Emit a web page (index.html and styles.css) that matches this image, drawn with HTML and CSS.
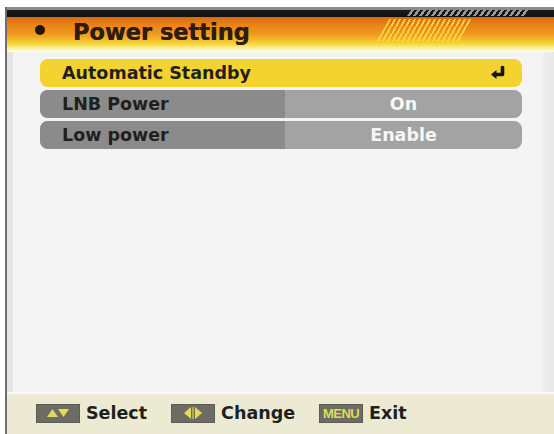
FILE: index.html
```html
<!DOCTYPE html>
<html>
<head>
<meta charset="utf-8">
<link rel="stylesheet" href="styles.css">
</head>
<body>
<div class="screen">
  <div class="frame">
    <div class="header">
      <div class="band"></div>
      <div class="title-row">
        <span class="bullet"></span>
        <span class="title">Power setting</span>
      </div>
      <div class="stripes-top"></div>
      <div class="stripes-low"></div>
    </div>
    <div class="rows">
      <div class="row active">
        <span class="label">Automatic Standby</span>
        <svg class="enter" width="16" height="15" viewBox="0 0 16 15">
          <path d="M12.5 1.5 V8.5 H6" fill="none" stroke="#141414" stroke-width="3.6" stroke-linecap="round" stroke-linejoin="round"/>
          <path d="M1 8.5 L6.5 4 L6.5 13 Z" fill="#141414"/>
        </svg>
      </div>
      <div class="row">
        <span class="label cell">LNB Power</span>
        <span class="value">On</span>
      </div>
      <div class="row">
        <span class="label cell">Low power</span>
        <span class="value">Enable</span>
      </div>
    </div>
    <div class="spacer"></div>
    <div class="footer">
      <div class="hint">
        <span class="key">
          <svg width="22" height="8" viewBox="0 0 22 8"><path d="M0 8 L5.5 0 L11 8 Z M11 0 L22 0 L16.5 8 Z" fill="#e6da52"/></svg>
        </span>
        <span class="hint-text">Select</span>
      </div>
      <div class="hint">
        <span class="key">
          <svg width="20" height="12" viewBox="0 0 20 12"><path d="M8 0 L8 12 L1 6 Z M12 0 L12 12 L19 6 Z" fill="#e6da52"/><rect x="9.2" y="0" width="1.6" height="12" fill="#c9bd3a"/></svg>
        </span>
        <span class="hint-text">Change</span>
      </div>
      <div class="hint">
        <span class="key menu">MENU</span>
        <span class="hint-text">Exit</span>
      </div>
    </div>
  </div>
</div>
</body>
</html>
```

FILE: styles.css
```css
html, body {
  margin: 0;
  padding: 0;
}
body {
  width: 554px;
  height: 434px;
  overflow: hidden;
  background: #ffffff;
  font-family: "DejaVu Sans", "Liberation Sans", sans-serif;
}
.screen {
  height: 434px;
  box-sizing: border-box;
  padding-top: 7px;
  display: flex;
  flex-direction: column;
}
.frame {
  flex: 1;
  margin-left: 5px;
  border-left: 2px solid #6e6e6e;
  background: #f4f4f4;
  box-shadow: inset 6px 0 0 #e4e4e4, inset -14px 0 10px -4px #e9e9e9;
  display: flex;
  flex-direction: column;
}
.header {
  position: relative;
  height: 45px;
  background: linear-gradient(to bottom,
    #d46c0e 10px, #e98418 18px, #ef9620 26px, #f4b528 32px,
    #f7d93a 37px, #fbefa0 41px, #fdfbea 45px);
  display: flex;
  flex-direction: column;
}
.band {
  height: 10px;
  background: linear-gradient(to bottom, #8c8c8c 0, #8c8c8c 3px, #1a1a1a 3px, #111 10px);
  flex: none;
}
.title-row {
  display: flex;
  align-items: center;
  height: 28px;
  padding-left: 28px;
}
.bullet {
  width: 10px;
  height: 10px;
  border-radius: 50%;
  background: #24160a;
  margin-right: 28px;
  margin-top: -2px;
}
.title {
  font-size: 22.5px;
  font-weight: bold;
  color: #2e1c0c;
  line-height: 28px;
  position: relative;
  top: 1px;
  text-shadow: 0 0 0.6px #2e1c0c;
}
.stripes-top {
  position: absolute;
  left: 402px;
  top: 3px;
  width: 118px;
  height: 6px;
  background: repeating-linear-gradient(to right, #9a9a9a 0, #9a9a9a 3px, transparent 3px, transparent 6px);
  transform: skewX(-35deg);
}
.stripes-low {
  position: absolute;
  left: 376px;
  top: 12px;
  width: 84px;
  height: 22px;
  background: repeating-linear-gradient(to right, rgba(255, 220, 70, 0.9) 0, rgba(255, 220, 70, 0.9) 2px, transparent 2px, transparent 5px);
  transform: skewX(-30deg);
}
.rows {
  margin: 7px 32px 0 33px;
  display: flex;
  flex-direction: column;
  gap: 3px;
}
.row {
  height: 28px;
  border-radius: 8px;
  display: flex;
  align-items: center;
  overflow: hidden;
  background: #a3a3a3;
  font-size: 17.5px;
  font-weight: bold;
}
.row.active {
  background: #f4d230;
  justify-content: space-between;
  padding-right: 16px;
}
.label {
  padding-left: 22px;
  color: #1f1f1f;
  line-height: 28px;
}
.label.cell {
  width: 245px;
  box-sizing: border-box;
  background: #8b8b8b;
  height: 28px;
  flex: none;
}
.value {
  flex: 1;
  text-align: center;
  color: #f6f6f6;
  line-height: 28px;
}
.enter {
  display: block;
}
.spacer {
  flex: 1;
}
.footer {
  height: 42px;
  background: #ecead3;
  border-top: 2px solid #fafaf4;
  display: flex;
  align-items: center;
  padding-left: 29px;
  padding-bottom: 2px;
  box-sizing: border-box;
  gap: 24px;
}
.hint {
  display: flex;
  align-items: center;
  gap: 6px;
}
.key {
  width: 44px;
  height: 19px;
  background: #6c6c64;
  border: 1px solid #5c5c55;
  box-sizing: border-box;
  display: flex;
  align-items: center;
  justify-content: center;
}
.key.menu {
  color: #dcdc5c;
  font-family: "Liberation Sans", sans-serif;
  font-size: 13px;
  font-weight: bold;
  letter-spacing: -0.6px;
}
.hint-text {
  font-size: 17.5px;
  font-weight: bold;
  color: #1f1f1f;
}
```
